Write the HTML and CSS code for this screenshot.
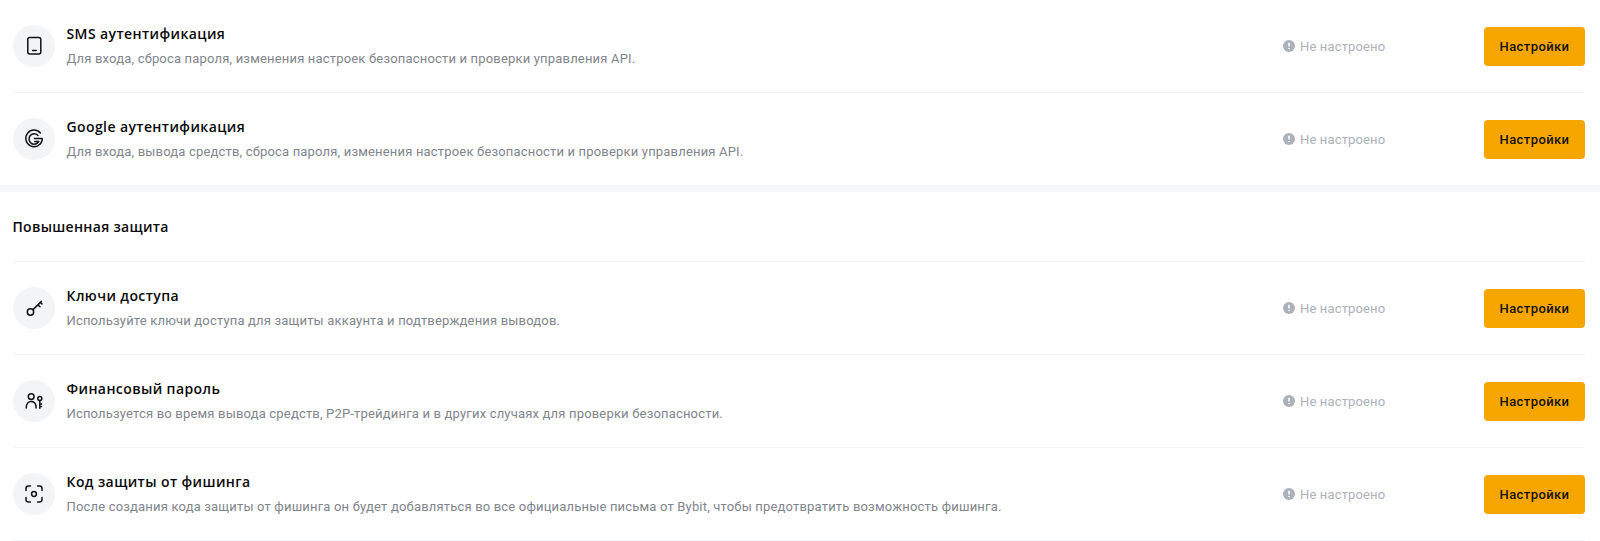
FILE: index.html
```html
<!DOCTYPE html>
<html lang="ru">
<head>
    <meta charset="UTF-8">
    <meta name="viewport" content="width=device-width, initial-scale=1.0">
    <title>Безопасность аккаунта</title>
    <link rel="stylesheet" href="styles.css">
</head>
<body>
    <section class="group">
        <div class="row">
            <div class="row-icon">
                <svg viewBox="0 0 24 24" width="24" height="24"><rect x="5.8" y="3.4" width="13" height="16.6" rx="2" class="line"/><path d="M10.6 16.6h3.6" class="line"/></svg>
            </div>
            <div class="row-text">
                <h3>SMS аутентификация</h3>
                <p>Для входа, сброса пароля, изменения настроек безопасности и проверки управления API.</p>
            </div>
            <div class="status">
                <svg viewBox="0 0 12 12" width="12" height="12"><circle cx="6" cy="6" r="6" fill="#adb1b8"/><path d="M6 2.8v3.6M6 8v1" stroke="#fff" stroke-width="1.5"/></svg>
                <span>Не настроено</span>
            </div>
            <button class="setup-button">Настройки</button>
        </div>

        <div class="row last">
            <div class="row-icon">
                <svg viewBox="0 0 24 24" width="24" height="24"><path d="M18.4 6A8.3 8.3 0 1 0 20.2 13.2V11.6H12.4M16 8.4A5.2 5.2 0 1 0 16.8 14.4H12.8" class="line"/></svg>
            </div>
            <div class="row-text">
                <h3>Google аутентификация</h3>
                <p>Для входа, вывода средств, сброса пароля, изменения настроек безопасности и проверки управления API.</p>
            </div>
            <div class="status">
                <svg viewBox="0 0 12 12" width="12" height="12"><circle cx="6" cy="6" r="6" fill="#adb1b8"/><path d="M6 2.8v3.6M6 8v1" stroke="#fff" stroke-width="1.5"/></svg>
                <span>Не настроено</span>
            </div>
            <button class="setup-button">Настройки</button>
        </div>
    </section>

    <div class="band"></div>

    <section class="group">
        <h2 class="group-title">Повышенная защита</h2>

        <div class="row">
            <div class="row-icon">
                <svg viewBox="0 0 24 24" width="24" height="24"><circle cx="8.5" cy="16" r="3.2" class="line"/><path d="M11 13.6L19.4 5.4M16 8.8l2 2M18.4 6.4l1.6 1.6" class="line"/></svg>
            </div>
            <div class="row-text">
                <h3>Ключи доступа</h3>
                <p>Используйте ключи доступа для защиты аккаунта и подтверждения выводов.</p>
            </div>
            <div class="status">
                <svg viewBox="0 0 12 12" width="12" height="12"><circle cx="6" cy="6" r="6" fill="#adb1b8"/><path d="M6 2.8v3.6M6 8v1" stroke="#fff" stroke-width="1.5"/></svg>
                <span>Не настроено</span>
            </div>
            <button class="setup-button">Настройки</button>
        </div>

        <div class="row">
            <div class="row-icon">
                <svg viewBox="0 0 24 24" width="24" height="24"><circle cx="9.2" cy="7.6" r="2.9" class="line"/><path d="M4.2 19c0-4.2 2-6.6 5-6.6 2.4 0 4.2 1.5 4.8 4.2V19" class="line"/><circle cx="17.8" cy="9.6" r="2" class="line"/><path d="M17.8 11.6V19.2M17.8 15h1.8M17.8 17.6h1.8" class="line"/></svg>
            </div>
            <div class="row-text">
                <h3>Финансовый пароль</h3>
                <p>Используется во время вывода средств, P2P-трейдинга и в других случаях для проверки безопасности.</p>
            </div>
            <div class="status">
                <svg viewBox="0 0 12 12" width="12" height="12"><circle cx="6" cy="6" r="6" fill="#adb1b8"/><path d="M6 2.8v3.6M6 8v1" stroke="#fff" stroke-width="1.5"/></svg>
                <span>Не настроено</span>
            </div>
            <button class="setup-button">Настройки</button>
        </div>

        <div class="row">
            <div class="row-icon">
                <svg viewBox="0 0 24 24" width="24" height="24"><path d="M4 8.4V6.4A2.4 2.4 0 0 1 6.4 4H8.4M15.6 4H17.6A2.4 2.4 0 0 1 20 6.4V8.4M20 15.6V17.6A2.4 2.4 0 0 1 17.6 20H15.6M8.4 20H6.4A2.4 2.4 0 0 1 4 17.6V15.6" class="line"/><circle cx="12" cy="12" r="2.4" class="line"/></svg>
            </div>
            <div class="row-text">
                <h3>Код защиты от фишинга</h3>
                <p>После создания кода защиты от фишинга он будет добавляться во все официальные письма от Bybit, чтобы предотвратить возможность фишинга.</p>
            </div>
            <div class="status">
                <svg viewBox="0 0 12 12" width="12" height="12"><circle cx="6" cy="6" r="6" fill="#adb1b8"/><path d="M6 2.8v3.6M6 8v1" stroke="#fff" stroke-width="1.5"/></svg>
                <span>Не настроено</span>
            </div>
            <button class="setup-button">Настройки</button>
        </div>
    </section>
</body>
</html>
```

FILE: styles.css
```css
body {
    font-family: "Roboto", "Liberation Sans", sans-serif;
    background-color: #fff;
    color: #0a0a0a;
    margin: 0;
}

.group {
    padding: 0 15px 0 12.5px;
}

.group-title {
    height: 69px;
    line-height: 70px;
    margin: 0;
    font-family: "Open Sans", sans-serif;
    font-size: 14px;
    font-weight: 600;
    letter-spacing: 0.3px;
    border-bottom: 1px solid #f3f4f6;
}

.row {
    display: flex;
    align-items: center;
    height: 92px;
    border-bottom: 1px solid #f3f4f6;
}

.row.last {
    border-bottom: none;
}

.row-icon {
    flex: none;
    display: flex;
    align-items: center;
    justify-content: center;
    width: 42px;
    height: 42px;
    border-radius: 50%;
    background-color: #f3f4f6;
}

.line {
    fill: none;
    stroke: #121214;
    stroke-width: 1.5;
    stroke-linecap: round;
    stroke-linejoin: round;
}

.row-text {
    flex: 1;
    margin-left: 12px;
}

.row-text h3 {
    margin: 0 0 7px;
    font-family: "Open Sans", sans-serif;
    font-size: 14px;
    line-height: 18px;
    font-weight: 600;
    letter-spacing: 0.4px;
}

.row-text p {
    margin: 0;
    font-size: 13px;
    line-height: 18px;
    letter-spacing: 0.18px;
    color: #81858c;
}

.status {
    display: flex;
    align-items: center;
    gap: 5px;
    width: 201px;
    font-size: 13px;
    letter-spacing: 0.15px;
    color: #adb1b8;
}

.setup-button {
    flex: none;
    width: 101px;
    height: 39px;
    padding: 0;
    border: none;
    border-radius: 4px;
    background-color: #f7a600;
    color: #121214;
    font-family: inherit;
    font-size: 13px;
    font-weight: 500;
    letter-spacing: 0.4px;
    cursor: pointer;
}

.band {
    height: 7px;
    background-color: #f5f7fa;
}
```
